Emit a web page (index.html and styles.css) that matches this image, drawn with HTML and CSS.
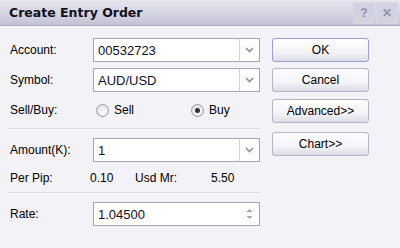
FILE: index.html
```html
<!DOCTYPE html>
<html>
    <head>
        <title>Create Entry Order</title>
        <link rel="stylesheet" href="styles.css">
    </head>
    <body>
        <div class="window">
            <div class="titlebar">
                <span class="title">Create Entry Order</span>
                <div class="title_buttons">
                    <span class="tbtn">?</span>
                    <span class="tbtn">&#x2715;</span>
                </div>
            </div>

            <div class="content">
                <div class="form">
                    <div class="row">
                        <label>Account:</label>
                        <div class="combo"><span class="value">00532723</span><span class="arrow"><svg width="9" height="6" viewBox="0 0 9 6"><path d="M1 1 L4.5 4.5 L8 1" fill="none" stroke="#8a8ea8" stroke-width="1.6"/></svg></span></div>
                    </div>
                    <div class="row">
                        <label>Symbol:</label>
                        <div class="combo"><span class="value">AUD/USD</span><span class="arrow"><svg width="9" height="6" viewBox="0 0 9 6"><path d="M1 1 L4.5 4.5 L8 1" fill="none" stroke="#8a8ea8" stroke-width="1.6"/></svg></span></div>
                    </div>
                    <div class="row">
                        <label>Sell/Buy:</label>
                        <div class="radios">
                            <span class="radio"><span class="dot"></span>Sell</span>
                            <span class="radio buy"><span class="dot checked"></span>Buy</span>
                        </div>
                    </div>

                    <div class="sep"></div>

                    <div class="row">
                        <label>Amount(K):</label>
                        <div class="combo"><span class="value">1</span><span class="arrow"><svg width="9" height="6" viewBox="0 0 9 6"><path d="M1 1 L4.5 4.5 L8 1" fill="none" stroke="#8a8ea8" stroke-width="1.6"/></svg></span></div>
                    </div>
                    <div class="row info">
                        <label>Per Pip:</label>
                        <span class="pip">0.10</span>
                        <span class="mr_label">Usd Mr:</span>
                        <span class="mr">5.50</span>
                    </div>

                    <div class="sep"></div>

                    <div class="row">
                        <label>Rate:</label>
                        <div class="combo"><span class="value">1.04500</span><span class="spin"><svg width="9" height="14" viewBox="0 0 9 14"><path d="M1.5 5 L4.5 2 L7.5 5 Z M1.5 9 L4.5 12 L7.5 9 Z" fill="#a0a4b8"/></svg></span></div>
                    </div>
                </div>

                <div class="buttons">
                    <button class="btn default">OK</button>
                    <button class="btn">Cancel</button>
                    <button class="btn adv">Advanced&gt;&gt;</button>
                    <button class="btn chart">Chart&gt;&gt;</button>
                </div>
            </div>
        </div>
    </body>
</html>
```

FILE: styles.css
```css
body {
    margin: 0;
    font-family: "Liberation Sans", Arial, sans-serif;
    font-size: 12px;
    color: #000;
}
.window {
    width: 400px;
    height: 248px;
    background-color: #f3f2f7;
    overflow: hidden;
}
.titlebar {
    height: 25px;
    display: flex;
    align-items: center;
    justify-content: space-between;
    padding-left: 9px;
    padding-right: 2px;
    background: linear-gradient(#e6e6ef, #d6d6e4 50%, #c2c2d4);
    border-bottom: 1px solid #a8a8bc;
}
.title {
    font-family: "DejaVu Sans", sans-serif;
    font-weight: bold;
    font-size: 12.5px;
    color: #101018;
}
.title_buttons {
    display: flex;
    gap: 1px;
}
.tbtn {
    width: 20px;
    height: 20px;
    display: flex;
    align-items: center;
    justify-content: center;
    border: 1px solid #d8d8e4;
    background: #d2d2e0;
    color: #9090a8;
    font-weight: bold;
    font-size: 12px;
}
.content {
    display: flex;
    padding-top: 12px;
}
.form {
    width: 252px;
    padding-left: 8px;
}
.row {
    display: flex;
    align-items: center;
    height: 24px;
    margin-bottom: 6px;
}
.row label {
    flex-shrink: 0;
    width: 83px;
    padding-left: 2px;
}
.combo {
    flex: 1;
    height: 22px;
    display: flex;
    align-items: stretch;
    background: #fff;
    border: 1px solid #a6a6b4;
}
.value {
    flex: 1;
    padding-left: 4px;
    display: flex;
    align-items: center;
    font-size: 13px;
    color: #10102a;
}
.arrow {
    width: 19px;
    display: flex;
    align-items: center;
    justify-content: center;
    border-left: 1px solid #d4d4de;
}
.spin {
    width: 19px;
    display: flex;
    align-items: center;
    justify-content: center;
}
.radios {
    display: flex;
    padding-left: 3px;
}
.radio {
    display: flex;
    align-items: center;
    width: 95px;
}
.radio.buy {
    width: auto;
}
.dot {
    width: 11px;
    height: 11px;
    border-radius: 50%;
    border: 1px solid #9a9aa8;
    background: radial-gradient(circle at 60% 65%, #fff, #d8d8e0);
    margin-right: 5px;
    position: relative;
}
.dot.checked::after {
    content: "";
    position: absolute;
    left: 3px;
    top: 3px;
    width: 5px;
    height: 5px;
    border-radius: 50%;
    background: #303040;
}
.sep {
    height: 1px;
    background: #d8d8e2;
    border-bottom: 1px solid #fff;
    margin: 1px 0 8px 0;
}
.row.info {
    height: 20px;
    margin-bottom: 4px;
}
.row.info label {
    width: 80px;
}
.pip {
    width: 45px;
}
.mr_label {
    width: 76px;
}
.buttons {
    display: flex;
    flex-direction: column;
    margin-left: 12px;
}
.btn {
    width: 97px;
    height: 24px;
    margin: 0 0 6px 0;
    padding: 0;
    font-family: "Liberation Sans", Arial, sans-serif;
    font-size: 12px;
    color: #000;
    border: 1px solid #b4b4c2;
    border-radius: 3px;
    background: linear-gradient(#ffffff, #f4f4f8 60%, #dcdce6);
}
.btn.default {
    border-color: #9c9cd0;
}
.btn.adv {
    margin-top: 1px;
    margin-bottom: 9px;
}
```
